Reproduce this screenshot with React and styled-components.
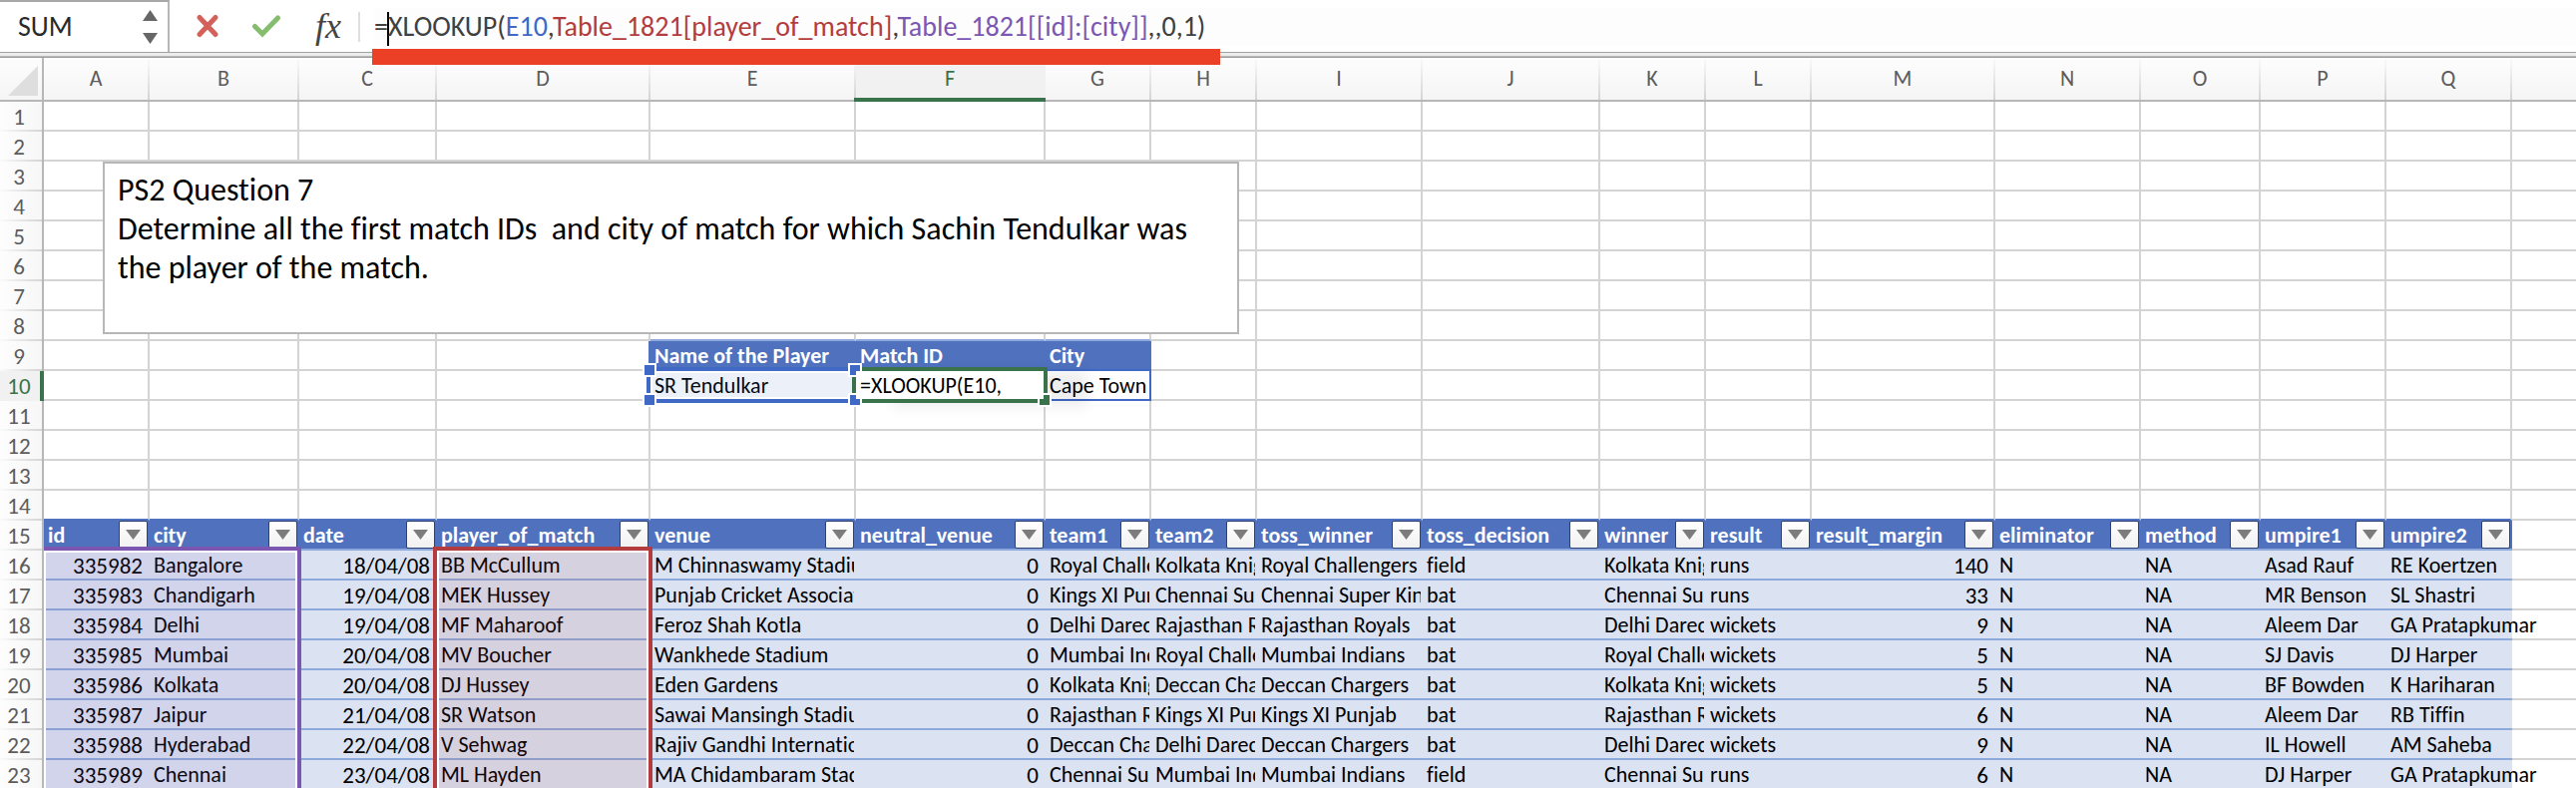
import React from "react";
import styled, { createGlobalStyle, css } from "styled-components";

const color = {
  grid: "#d4d4d4",
  frame: "#b7b7b7",
  head: "#4f71be",
  line: "#8ea9db",
  fill: "#dbe2f2",
  blue: "#3f69c4",
  red: "#b33c3f",
  purple: "#7b57b2",
  green: "#3a734b",
  ink: "#5c5c5c",
};

const GlobalStyle = createGlobalStyle`
  *, *::before, *::after { box-sizing: border-box; }
  body {
    margin: 0;
    background: #fff;
    color: #000;
    font-family: Calibri, Carlito, Lato, sans-serif;
    font-size: 22px;
    font-variant-ligatures: none;
  }
  button, input { font: inherit; color: inherit; }
`;

const Page = styled.div`
  height: 100vh;
  overflow: hidden;
`;

/* ---------- formula bar ---------- */

const FormulaBar = styled.header`
  position: relative;
  display: flex;
  height: 58px;
  padding-bottom: 6px;
  background: linear-gradient(#a2a2a2 0 1px, #ececec 1px 4px, #b9b9b9 4px 5px, #9c9c9c 5px 6px) bottom / 100% 6px no-repeat;
`;

const NameBox = styled.div`
  display: flex;
  align-items: center;
  width: 170px;
  padding: 0 10px 0 18px;
  border-top: 2px solid #a8a8a8;
  border-right: 2px solid ${color.frame};
`;

const NameInput = styled.input`
  flex: 1;
  min-width: 0;
  padding: 0;
  border: 0;
  outline: 0;
  background: none;
  color: #2a2a2a;
  font-size: 28px;
  line-height: 34px;
`;

const Stepper = styled.div`
  display: flex;
  flex-direction: column;
  gap: 12px;
`;

const PlainButton = styled.button`
  display: flex;
  align-items: center;
  justify-content: center;
  padding: 0;
  border: 0;
  background: none;
`;

const Actions = styled.div`
  display: flex;
  align-items: center;
  gap: 32px;
  padding: 0 15px 0 26px;
`;

const FxButton = styled(PlainButton)`
  width: 30px;
  color: #444;
  font: italic 36px/44px "Liberation Serif", serif;
`;

const Separator = styled.span`
  width: 2px;
  height: 30px;
  margin: 12px 14px 0 0;
  background: #dedede;
`;

const Formula = styled.div`
  flex: 1;
  margin: 8px 0 6px;
  background: #fdfdfd;
  color: #404040;
  font-size: 28px;
  line-height: 38px;
  white-space: nowrap;
  outline: 0;
`;

const Ref = styled.span`
  color: ${(p) => p.$color};
`;

const Caret = styled.span`
  display: inline-block;
  width: 2px;
  height: 34px;
  margin: 0 -1px;
  background: #000;
  vertical-align: middle;
`;

const RedUnderline = styled.div`
  position: absolute;
  z-index: 5;
  top: 49px;
  left: 373px;
  width: 850px;
  height: 16px;
  background: #eb4026;
`;

/* ---------- sheet ---------- */

const Sheet = styled.main`
  position: relative;
`;

const Grid = styled.table`
  width: 100%;
  table-layout: fixed;
  border-collapse: separate;
  border-spacing: 0;
`;

const Corner = styled.td`
  height: 44px;
  padding: 0;
  border-right: 2px solid ${color.frame};
  border-bottom: 2px solid ${color.frame};
  background: linear-gradient(#fdfdfd, #f5f5f5);

  svg { display: block; margin: 4px 0 0 8px; }
`;

const ColumnHead = styled.th`
  position: relative;
  height: 44px;
  padding: 0 2px 0 0;
  border-bottom: 2px solid ${color.frame};
  background:
    linear-gradient(#fafafa, ${color.grid}) right / 2px 100% no-repeat,
    linear-gradient(#fdfdfd, #f5f5f5);
  color: ${color.ink};
  font-weight: 400;
  line-height: 28px;

  &:last-child { background: linear-gradient(#fdfdfd, #f5f5f5); }

  ${(p) => p.$active && css`
    background: #f1f1f1;
    color: ${color.green};
    &::after {
      content: "";
      position: absolute;
      right: 0;
      bottom: -2px;
      left: -2px;
      height: 4px;
      background: ${color.green};
    }
  `}
`;

const RowHead = styled.th`
  height: 30px;
  padding: 0 4px 0 0;
  border-right: 2px solid ${color.frame};
  background:
    linear-gradient(90deg, #fafafa, ${color.grid}) bottom / 100% 2px no-repeat,
    linear-gradient(90deg, #fdfdfd, #f7f7f7);
  color: ${color.ink};
  font-size: 23px;
  font-weight: 400;
  line-height: 28px;

  ${(p) => p.$active && css`
    border-right: 4px solid ${color.green};
    padding-right: 2px;
    background: #f1f1f1;
    color: ${color.green};
  `}
`;

const Cell = styled.td`
  position: relative;
  height: 30px;
  padding: 2px 4px 0;
  border-right: 2px solid ${(p) => p.$right || color.grid};
  border-bottom: 2px solid ${(p) => p.$bottom || color.grid};
  line-height: 26px;
  white-space: nowrap;

  &:last-child { border-right: 0; }
`;

const DataCell = styled(Cell)`
  padding: 2px 2px 0 0;
  border-right: 0;
  border-bottom-color: ${color.line};
  background: ${color.fill};
`;

const DataText = styled.div`
  padding: 0 5px 0 4px;
  padding-right: ${(p) => (p.$number ? "5px" : "0")};
  overflow: ${(p) => (p.$spill ? "visible" : "hidden")};
  font-size: ${(p) => (p.$number ? "23px" : "22px")};
  text-align: ${(p) => (p.$number ? "right" : "left")};
`;

const HeadCell = styled.th`
  height: 30px;
  padding: 0 2px 0 4px;
  border-bottom: 2px solid ${(p) => p.$bottom || color.line};
  background: ${color.head};
  color: #fff;
  font-weight: 700;
  line-height: 28px;
  text-align: left;
  white-space: nowrap;
`;

const HeadContent = styled.div`
  display: flex;
  justify-content: space-between;
  height: 28px;
`;

const HeadText = styled.span`
  padding-top: 2px;
  line-height: 26px;
`;

const FilterButton = styled(PlainButton)`
  flex: none;
  width: 29px;
  height: 28px;
  border: 1px solid #2b4374;
  border-radius: 2px;
  background: linear-gradient(#fff, #f1f1f1);
`;

/* ---------- overlays ---------- */

const Handle = styled.i`
  position: absolute;
  z-index: 2;
  width: 10px;
  height: 10px;
  background: ${(p) => p.$color};
  box-shadow: 0 0 0 2px #fff;
  ${(p) => (p.$v === "top" ? "top: -6px;" : "bottom: -6px;")}
  ${(p) => (p.$h === "left" ? "left: -6px;" : "right: -6px;")}
`;

const Ring = styled.div`
  position: absolute;
  z-index: 1;
  inset: -4px;
  border: 4px solid ${(p) => p.$color};
  box-shadow: ${(p) => (p.$lifted ? "40px 4px 14px rgba(0, 0, 0, 0.07)" : "inset 0 0 0 2px #fff")};
  background: ${(p) => p.$wash || "none"};
  pointer-events: none;
`;

const Editor = styled.div`
  position: absolute;
  z-index: 3;
  inset: 0;
  padding: 2px 4px 0;
  background: #fff;
  line-height: 26px;
`;

const ResultText = styled.span`
  position: relative;
  z-index: 1;
`;

const ResultFrame = styled.div`
  position: absolute;
  z-index: 0;
  inset: -2px -2px -2px 0;
  border: 2px solid ${color.blue};
  background: #fff;
`;

const RangeOutline = styled.div`
  position: absolute;
  z-index: 1;
  top: -4px;
  left: ${(p) => (p.$flush ? "0" : "-4px")};
  width: ${(p) => p.$width + (p.$flush ? 2 : 6)}px;
  height: ${(p) => p.$rows * 30 + 8}px;
  border: 4px solid ${(p) => p.$color};
  border-left-width: ${(p) => (p.$flush ? "0" : "4px")};
  box-shadow: inset 0 0 0 2px #fff;
  background: ${(p) => p.$wash};
  pointer-events: none;
`;

const Note = styled.section`
  position: absolute;
  z-index: 2;
  top: 104px;
  left: 103px;
  width: 1139px;
  height: 173px;
  padding: 7px 13px;
  border: 2px solid ${color.frame};
  background: #fff;
  font-size: 32px;
  line-height: 39px;
  white-space: pre-wrap;

  p { margin: 0; }
`;

/* ---------- data ---------- */

const columns = [
  ["A", 106], ["B", 150], ["C", 138], ["D", 214], ["E", 206], ["F", 190],
  ["G", 106], ["H", 106], ["I", 166], ["J", 178], ["K", 106], ["L", 106],
  ["M", 184], ["N", 146], ["O", 120], ["P", 126], ["Q", 126],
];

const fields = [
  "id", "city", "date", "player_of_match", "venue", "neutral_venue", "team1",
  "team2", "toss_winner", "toss_decision", "winner", "result",
  "result_margin", "eliminator", "method", "umpire1", "umpire2",
];

const numeric = new Set(["id", "date", "neutral_venue", "result_margin"]);

const RCB = "Royal Challengers";
const KKR = "Kolkata Knight Riders";
const CSK = "Chennai Super Kings";
const KXP = "Kings XI Punjab";
const DD = "Delhi Daredevils";
const RR = "Rajasthan Royals";
const MI = "Mumbai Indians";
const DC = "Deccan Chargers";

const matches = [
  [335982, "Bangalore", "18/04/08", "BB McCullum", "M Chinnaswamy Stadium", 0, RCB, KKR, RCB, "field", KKR, "runs", 140, "N", "NA", "Asad Rauf", "RE Koertzen"],
  [335983, "Chandigarh", "19/04/08", "MEK Hussey", "Punjab Cricket Association", 0, KXP, CSK, CSK, "bat", CSK, "runs", 33, "N", "NA", "MR Benson", "SL Shastri"],
  [335984, "Delhi", "19/04/08", "MF Maharoof", "Feroz Shah Kotla", 0, DD, RR, RR, "bat", DD, "wickets", 9, "N", "NA", "Aleem Dar", "GA Pratapkumar"],
  [335985, "Mumbai", "20/04/08", "MV Boucher", "Wankhede Stadium", 0, MI, RCB, MI, "bat", RCB, "wickets", 5, "N", "NA", "SJ Davis", "DJ Harper"],
  [335986, "Kolkata", "20/04/08", "DJ Hussey", "Eden Gardens", 0, KKR, DC, DC, "bat", KKR, "wickets", 5, "N", "NA", "BF Bowden", "K Hariharan"],
  [335987, "Jaipur", "21/04/08", "SR Watson", "Sawai Mansingh Stadium", 0, RR, KXP, KXP, "bat", RR, "wickets", 6, "N", "NA", "Aleem Dar", "RB Tiffin"],
  [335988, "Hyderabad", "22/04/08", "V Sehwag", "Rajiv Gandhi International", 0, DC, DD, DC, "bat", DD, "wickets", 9, "N", "NA", "IL Howell", "AM Saheba"],
  [335989, "Chennai", "23/04/08", "ML Hayden", "MA Chidambaram Stadium", 0, CSK, MI, MI, "field", CSK, "runs", 6, "N", "NA", "DJ Harper", "GA Pratapkumar"],
];

/* ---------- parts ---------- */

const Triangle = ({ up, width = 15, height = 10, fill = "#666" }) => (
  <svg width={width} height={height} viewBox="0 0 15 10" preserveAspectRatio="none" aria-hidden="true">
    <path d={up ? "M7.500 0L15 10H0z" : "M0 0h15L7.500 10z"} fill={fill} />
  </svg>
);

const CrossIcon = () => (
  <svg width="24" height="24" viewBox="0 0 24 24" aria-hidden="true">
    <path d="M4 3.500L20 20.500M20 3.500L4 20.500" stroke="#d4605a" strokeWidth="5" strokeLinecap="round" />
  </svg>
);

const CheckIcon = () => (
  <svg width="30" height="24" viewBox="0 0 30 24" fill="none" aria-hidden="true">
    <path d="M3.500 12.500L11 20L26.500 4" stroke="#85bd6e" strokeWidth="5" strokeLinecap="round" />
  </svg>
);

const lookupHeads = { E: "Name of the Player", F: "Match ID", G: "City" };

function PlainCell({ row, letter }) {
  if (row === 9 && lookupHeads[letter]) {
    return (
      <HeadCell scope="col" $bottom={color.blue}>
        <HeadContent><HeadText>{lookupHeads[letter]}</HeadText></HeadContent>
      </HeadCell>
    );
  }
  if (row === 10 && letter === "E") {
    return (
      <Cell>
        SR Tendulkar
        <Ring $color={color.blue} $wash="rgba(63, 105, 196, 0.1)" />
        <Handle $color={color.blue} $v="top" $h="left" />
        <Handle $color={color.blue} $v="bottom" $h="left" />
        <Handle $color={color.blue} $v="top" $h="right" />
        <Handle $color={color.blue} $v="bottom" $h="right" />
      </Cell>
    );
  }
  if (row === 10 && letter === "F") {
    return (
      <Cell>
        <Ring $color={color.green} $lifted />
        <Editor>=XLOOKUP(E10,</Editor>
        <Handle $color={color.green} $v="bottom" $h="right" />
      </Cell>
    );
  }
  if (row === 10 && letter === "G") {
    return (
      <Cell>
        <ResultFrame />
        <ResultText>Cape Town</ResultText>
      </Cell>
    );
  }
  const bottom =
    row === 14 ? color.head : row === 8 && lookupHeads[letter] ? color.line : undefined;
  const right = row === 9 && letter === "D" ? color.head : undefined;
  return <Cell $bottom={bottom} $right={right} />;
}

const DataRow = ({ match, first }) =>
  match.map((value, i) => (
    <DataCell key={fields[i]}>
      <DataText $number={numeric.has(fields[i])} $spill={fields[i] === "umpire2"}>{value}</DataText>
      {first && fields[i] === "id" && (
        <RangeOutline $flush $width={256} $rows={8} $color={color.purple} $wash="rgba(123, 87, 178, 0.1)" />
      )}
      {first && fields[i] === "player_of_match" && (
        <RangeOutline $width={214} $rows={8} $color={color.red} $wash="rgba(179, 60, 63, 0.1)" />
      )}
    </DataCell>
  ));

export default function App() {
  return (
    <Page>
      <GlobalStyle />
      <FormulaBar>
        <NameBox>
          <NameInput aria-label="Name box" defaultValue="SUM" />
          <Stepper>
            <PlainButton aria-label="Previous name"><Triangle up height={11} /></PlainButton>
            <PlainButton aria-label="Next name"><Triangle height={11} /></PlainButton>
          </Stepper>
        </NameBox>
        <Actions>
          <PlainButton aria-label="Cancel"><CrossIcon /></PlainButton>
          <PlainButton aria-label="Enter"><CheckIcon /></PlainButton>
          <FxButton aria-label="Insert function">fx</FxButton>
        </Actions>
        <Separator />
        <Formula role="textbox" aria-label="Formula" contentEditable suppressContentEditableWarning spellCheck={false}>
          =<Caret />XLOOKUP(<Ref $color={color.blue}>E10</Ref>,
          <Ref $color={color.red}>Table_1821[player_of_match]</Ref>,
          <Ref $color={color.purple}>Table_1821[[id]:[city]]</Ref>,,0,1)
        </Formula>
        <RedUnderline />
      </FormulaBar>

      <Sheet>
        <Grid>
          <colgroup>
            <col width="44" />
            {columns.map(([letter, width]) => <col key={letter} width={width} />)}
            <col />
          </colgroup>
          <thead>
            <tr>
              <Corner>
                <svg width="30" height="30" viewBox="0 0 30 30" aria-hidden="true">
                  <path d="M30 0V30H0z" fill="#dedede" />
                </svg>
              </Corner>
              {columns.map(([letter]) => (
                <ColumnHead key={letter} scope="col" $active={letter === "F"}>{letter}</ColumnHead>
              ))}
              <ColumnHead as="td" />
            </tr>
          </thead>
          <tbody>
            {Array.from({ length: 14 }, (_, i) => i + 1).map((row) => (
              <tr key={row}>
                <RowHead scope="row" $active={row === 10}>{row}</RowHead>
                {columns.map(([letter]) => <PlainCell key={letter} row={row} letter={letter} />)}
                <Cell />
              </tr>
            ))}
            <tr>
              <RowHead scope="row">15</RowHead>
              {fields.map((name) => (
                <HeadCell key={name} scope="col">
                  <HeadContent>
                    <HeadText>{name}</HeadText>
                    <FilterButton aria-label={`Filter ${name}`}><Triangle fill="#7c7c7c" /></FilterButton>
                  </HeadContent>
                </HeadCell>
              ))}
              <Cell />
            </tr>
            {matches.map((match, i) => (
              <tr key={match[0]}>
                <RowHead scope="row">{16 + i}</RowHead>
                <DataRow match={match} first={i === 0} />
                <Cell />
              </tr>
            ))}
          </tbody>
        </Grid>
        <Note>
          <p>PS2 Question 7</p>
          <p>{"Determine all the first match IDs  and city of match for which Sachin Tendulkar was the player of the match."}</p>
        </Note>
      </Sheet>
    </Page>
  );
}
